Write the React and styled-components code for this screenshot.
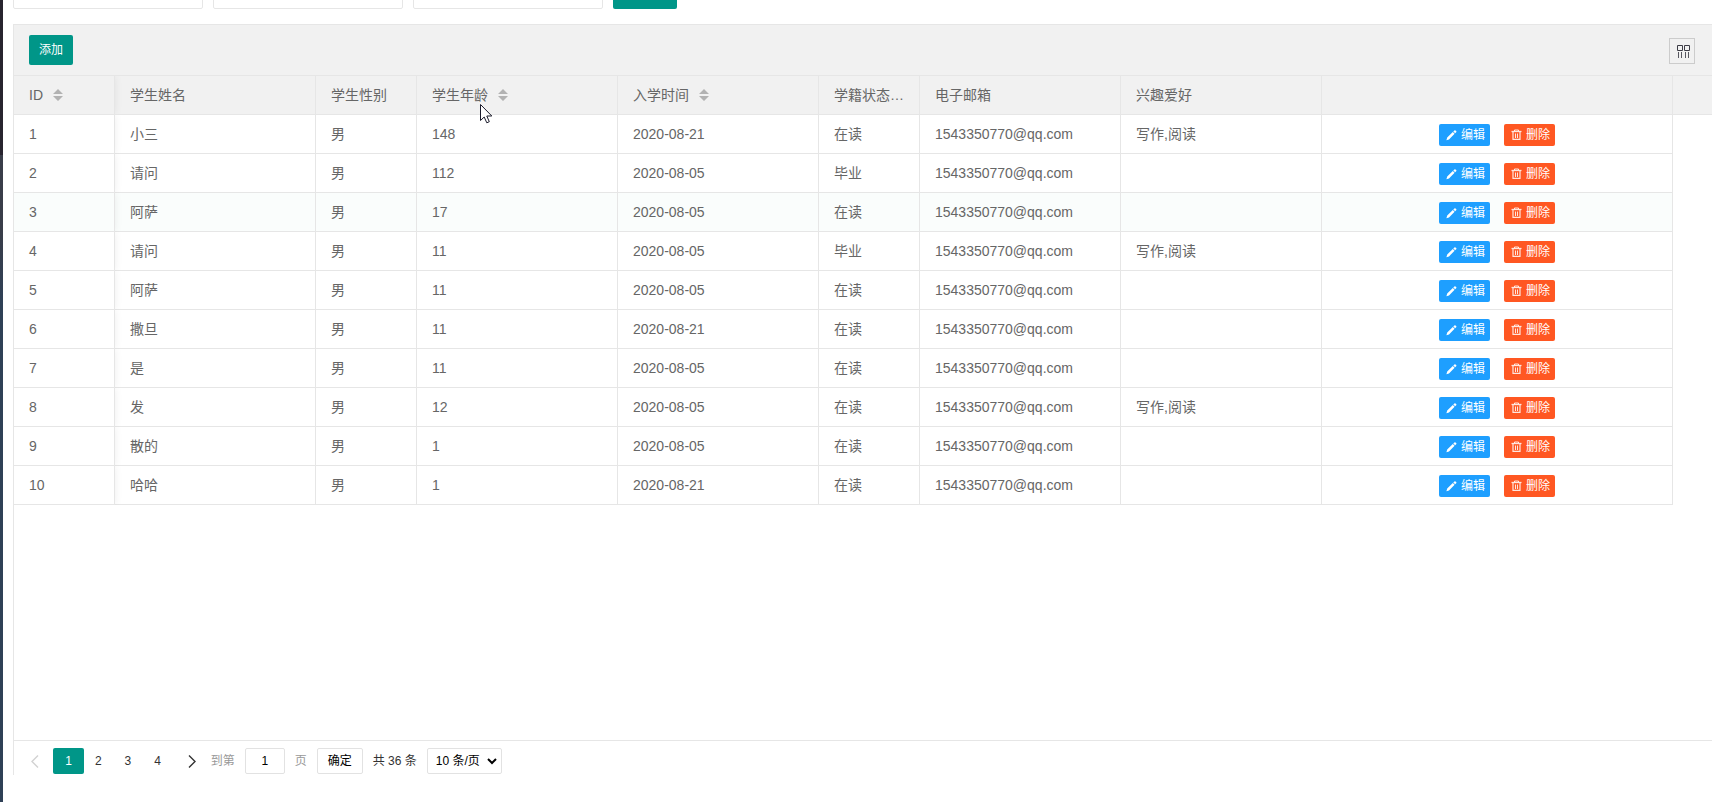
import React from "react";
import styled, { createGlobalStyle } from "styled-components";

const columns = [
  { key: "id", title: "ID", width: 101, sort: true },
  { key: "name", title: "学生姓名", width: 201 },
  { key: "sex", title: "学生性别", width: 101 },
  { key: "age", title: "学生年龄", width: 201, sort: true },
  { key: "date", title: "入学时间", width: 201, sort: true },
  { key: "status", title: "学籍状态…", width: 101 },
  { key: "email", title: "电子邮箱", width: 201 },
  { key: "hobby", title: "兴趣爱好", width: 201 },
  { key: "tool", title: "", width: 351 },
];

const email = "1543350770@qq.com";

const students = [
  { id: 1, name: "小三", sex: "男", age: 148, date: "2020-08-21", status: "在读", email, hobby: "写作,阅读" },
  { id: 2, name: "请问", sex: "男", age: 112, date: "2020-08-05", status: "毕业", email },
  { id: 3, name: "阿萨", sex: "男", age: 17, date: "2020-08-05", status: "在读", email },
  { id: 4, name: "请问", sex: "男", age: 11, date: "2020-08-05", status: "毕业", email, hobby: "写作,阅读" },
  { id: 5, name: "阿萨", sex: "男", age: 11, date: "2020-08-05", status: "在读", email },
  { id: 6, name: "撒旦", sex: "男", age: 11, date: "2020-08-21", status: "在读", email },
  { id: 7, name: "是", sex: "男", age: 11, date: "2020-08-05", status: "在读", email },
  { id: 8, name: "发", sex: "男", age: 12, date: "2020-08-05", status: "在读", email, hobby: "写作,阅读" },
  { id: 9, name: "散的", sex: "男", age: 1, date: "2020-08-05", status: "在读", email },
  { id: 10, name: "哈哈", sex: "男", age: 1, date: "2020-08-21", status: "在读", email },
];

const App = () => {
  return (
    <>
      <GlobalStyle />
      <Page>
        <SideEdge>
          <SideDark />
        </SideEdge>
        <Body>
          <SearchBar>
            <SearchInput />
            <SearchInput />
            <SearchInput />
            <SearchButton />
          </SearchBar>
          <TableView>
            <Toolbar>
              <AddButton>添加</AddButton>
              <ToolButton>
                <ColumnsIcon />
              </ToolButton>
            </Toolbar>
            <Table>
              <HeadRow>
                {columns.map((col) => (
                  <Cell key={col.key} $width={col.width} $fixed={col.key === "id"}>
                    <CellText>{col.title}</CellText>
                    {col.sort && <SortIcon />}
                  </Cell>
                ))}
              </HeadRow>
              {students.map((item) => (
                <Row key={item.id} $hover={item.id === 3}>
                  {columns.map((col) =>
                    col.key === "tool" ? (
                      <Cell key={col.key} $width={col.width} $center>
                        <RowButton $color="#1e9fff">
                          <EditIcon />
                          编辑
                        </RowButton>
                        <RowButton $color="#ff5722">
                          <DeleteIcon />
                          删除
                        </RowButton>
                      </Cell>
                    ) : (
                      <Cell key={col.key} $width={col.width} $fixed={col.key === "id"}>
                        <CellText>{item[col.key]}</CellText>
                      </Cell>
                    )
                  )}
                </Row>
              ))}
            </Table>
            <Pagination>
              <PageArrow $disabled>
                <Chevron points="8,1.5 2,7.5 8,13.5" />
              </PageArrow>
              <PageNumber $active>1</PageNumber>
              <PageNumber>2</PageNumber>
              <PageNumber>3</PageNumber>
              <PageNumber>4</PageNumber>
              <PageArrow $next>
                <Chevron points="2,1.5 8,7.5 2,13.5" />
              </PageArrow>
              <PageLabel $width={34}>到第</PageLabel>
              <PageInput defaultValue="1" />
              <PageLabel $width={22}>页</PageLabel>
              <ConfirmButton>确定</ConfirmButton>
              <PageCount>共 36 条</PageCount>
              <PageSize>
                10 条/页
                <SelectArrow />
              </PageSize>
            </Pagination>
          </TableView>
        </Body>
        <Pointer />
      </Page>
    </>
  );
};

export default App;

// icons
const SortIcon = () => (
  <SortSvg width="10" height="12" viewBox="0 0 10 12">
    <path d="M0 5L5 0L10 5Z M0 7L5 12L10 7Z" fill="#b2b2b2" />
  </SortSvg>
);

const ColumnsIcon = () => (
  <svg width="14" height="14" viewBox="0 0 14 14" fill="none" stroke="#3c3c46">
    <path d="M1.5 1.5h5v5h-5z M8.5 1.5h5v5h-5z" />
    <path d="M2.5 8v6 M5.5 8v6 M9.5 8v6 M12.5 8v6" strokeOpacity="0.85" />
  </svg>
);

const EditIcon = () => (
  <svg width="12" height="12" viewBox="0 0 12 12" fill="#fff">
    <path d="M.4 11.2L1.2 8.6L6.8 3L8.6 4.8L3 10.4Z M7.3 2.5L8.4 1.4Q9 .9 9.5 1.4L10.2 2.1Q10.7 2.6 10.2 3.2L9.1 4.3Z" />
  </svg>
);

const DeleteIcon = () => (
  <svg width="12" height="12" viewBox="0 0 12 12" fill="none" stroke="#fff" strokeOpacity="0.85">
    <path d="M.5 2.5h10" strokeWidth="1.3" />
    <path d="M3.5 2V1h4V2" />
    <path d="M2 3V10.3h7V3" strokeWidth="1.2" />
    <path d="M4.5 4.5v4.5 M6.5 4.5v4.5" />
  </svg>
);

const Chevron = ({ points }) => (
  <svg width="10" height="15" viewBox="0 0 10 15" fill="none" stroke="currentColor" strokeWidth="1.4">
    <polyline points={points} />
  </svg>
);

const SelectArrow = () => (
  <svg width="10" height="7" viewBox="0 0 10 7" fill="none" stroke="#000" strokeWidth="2">
    <path d="M1 1l4 4l4 -4" />
  </svg>
);

const Pointer = () => (
  <PointerSvg width="13" height="20" viewBox="0 0 13 20">
    <path
      d="M.5 .5V16.5L4.2 13L6.8 18.8L9.3 17.7L6.8 12H11.8Z"
      fill="#fff"
      stroke="#1a1a2a"
    />
  </PointerSvg>
);

const GlobalStyle = createGlobalStyle`
  * {
    box-sizing: border-box;
  }
  body {
    margin: 0;
    overflow: hidden;
    background: #fff;
    font-family: "Liberation Sans", "Noto Sans CJK SC", sans-serif;
    font-size: 14px;
    color: #666;
  }
`;

const Page = styled.div`
  position: relative;
  width: 100%;
  height: 802px;
  display: flex;
  overflow: hidden;
`;

const SideEdge = styled.div`
  flex: none;
  width: 3px;
  background: linear-gradient(#393d49 0, #393d49 230px, #2f4056 300px);
`;

const SideDark = styled.div`
  height: 155px;
  background: #28242f;
`;

const Body = styled.div`
  flex: 1;
  min-width: 0;
  padding-left: 10px;
`;

const SearchBar = styled.div`
  display: flex;
  align-items: flex-end;
  gap: 10px;
  height: 9px;
  overflow: hidden;
`;

const SearchInput = styled.input`
  flex: none;
  width: 190px;
  height: 38px;
  border: 1px solid #e6e6e6;
  border-radius: 2px;
`;

const SearchButton = styled.div`
  flex: none;
  width: 64px;
  height: 38px;
  border-radius: 2px;
  background: #009688;
`;

const TableView = styled.div`
  height: 751px;
  margin-top: 15px;
  display: flex;
  flex-direction: column;
  border-top: 1px solid #e6e6e6;
  border-left: 1px solid #e6e6e6;
`;

const Toolbar = styled.div`
  flex: none;
  height: 51px;
  padding: 0 17px 0 15px;
  display: flex;
  align-items: center;
  justify-content: space-between;
  background: #f1f1f1;
  border-bottom: 1px solid #e6e6e6;
`;

const AddButton = styled.button`
  width: 44px;
  height: 30px;
  padding: 0;
  border: none;
  border-radius: 2px;
  background: #009688;
  color: #fff;
  font-family: inherit;
  font-size: 12px;
  line-height: 30px;
`;

const ToolButton = styled.div`
  width: 26px;
  height: 26px;
  margin-top: 2px;
  display: flex;
  align-items: center;
  justify-content: center;
  padding-left: 2px;
  border: 1px solid #ccc;
`;

const Table = styled.div`
  flex: 1;
`;

const Row = styled.div`
  display: flex;
  width: 1659px;
  height: 39px;
  background: ${({ $hover }) => ($hover ? "#fafdfc" : "#fff")};
`;

const HeadRow = styled(Row)`
  width: 100%;
  background: #f1f1f1;
  border-bottom: 1px solid #e6e6e6;

  & > div {
    border-bottom: none;
  }
`;

const Cell = styled.div`
  flex: none;
  width: ${({ $width }) => $width}px;
  padding: 0 15px;
  display: flex;
  align-items: center;
  justify-content: ${({ $center }) => ($center ? "center" : "flex-start")};
  gap: ${({ $center }) => ($center ? "14px" : "0")};
  border-right: 1px solid #e6e6e6;
  border-bottom: 1px solid #e6e6e6;
  box-shadow: ${({ $fixed }) => ($fixed ? "0 0 8px rgba(0, 0, 0, 0.07)" : "none")};
  clip-path: ${({ $fixed }) => ($fixed ? "inset(0 -12px 0 0)" : "none")};
`;

const CellText = styled.span`
  white-space: nowrap;
  line-height: 28px;
`;

const SortSvg = styled.svg`
  flex: none;
  margin-left: 10px;
`;

const RowButton = styled.div`
  width: 51px;
  height: 22px;
  margin-top: 1px;
  padding-left: 2px;
  display: flex;
  align-items: center;
  justify-content: center;
  gap: 3px;
  border-radius: 2px;
  background: ${({ $color }) => $color};
  color: #fff;
  font-size: 12px;
  line-height: 22px;
  white-space: nowrap;
`;

const Pagination = styled.div`
  flex: none;
  height: 35px;
  padding: 7px 0 0 7px;
  display: flex;
  align-items: flex-start;
  border-top: 1px solid #e6e6e6;
  font-size: 12px;
  line-height: 26px;
  color: #333;
`;

const PageArrow = styled.div`
  width: ${({ $next }) => ($next ? "38px" : "32px")};
  height: 26px;
  padding-left: ${({ $next }) => ($next ? "14px" : "9px")};
  display: flex;
  align-items: center;
  color: ${({ $disabled }) => ($disabled ? "#d2d2d2" : "#333")};
`;

const PageNumber = styled.div`
  width: ${({ $active }) => ($active ? "31px" : "29.6px")};
  height: 26px;
  padding-right: ${({ $active }) => ($active ? "0" : "1px")};
  border-radius: 2px;
  background: ${({ $active }) => ($active ? "#009688" : "none")};
  color: ${({ $active }) => ($active ? "#fff" : "#333")};
  text-align: center;
`;

const PageLabel = styled.div`
  width: ${({ $width }) => $width}px;
  color: #999;
`;

const PageInput = styled.input`
  width: 40px;
  height: 26px;
  margin-right: 10px;
  padding: 0;
  border: 1px solid #e2e2e2;
  border-radius: 2px;
  color: #000;
  font-family: inherit;
  font-size: 12px;
  text-align: center;
`;

const ConfirmButton = styled.div`
  width: 46px;
  height: 26px;
  border: 1px solid #e2e2e2;
  border-radius: 2px;
  color: #000;
  line-height: 25px;
  text-align: center;
`;

const PageCount = styled.div`
  width: 64px;
  padding-left: 10px;
  white-space: nowrap;
`;

const PageSize = styled.div`
  width: 75px;
  height: 26px;
  padding: 0 4px 0 8px;
  display: flex;
  align-items: center;
  justify-content: space-between;
  border: 1px solid #e2e2e2;
  border-radius: 2px;
  color: #000;
  line-height: 24px;
  white-space: nowrap;
`;

const PointerSvg = styled.svg`
  position: absolute;
  left: 480px;
  top: 104px;
`;
